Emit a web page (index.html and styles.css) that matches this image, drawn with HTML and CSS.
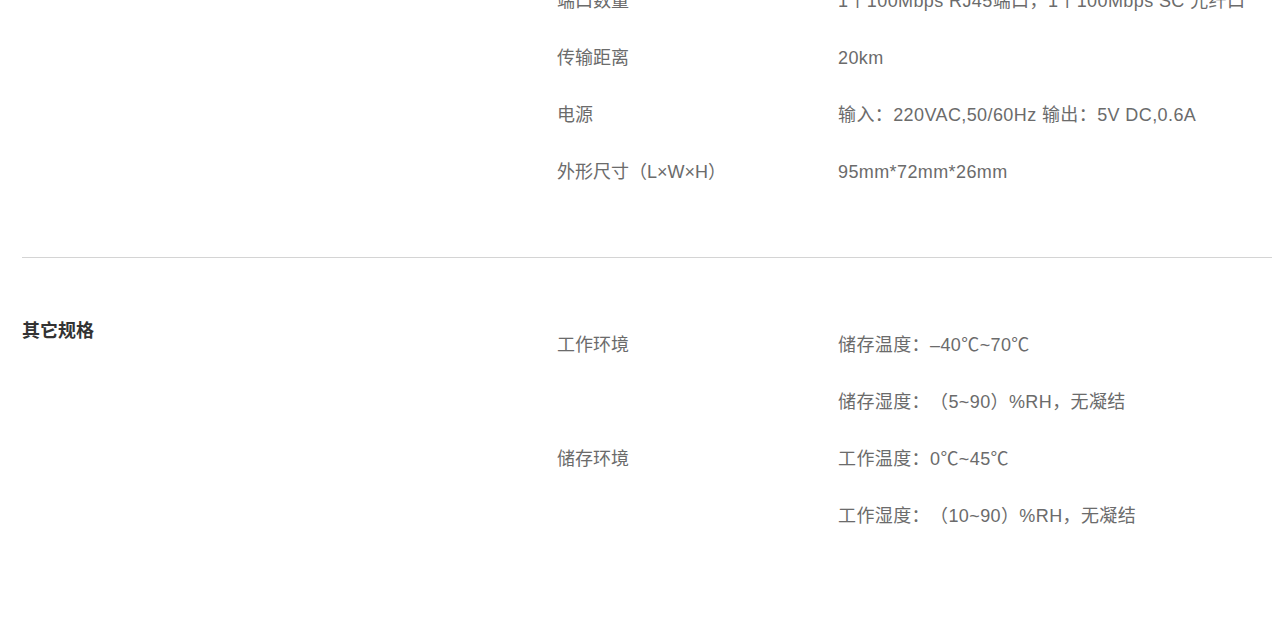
FILE: index.html
```html
<!DOCTYPE html>
<html lang="zh-CN">
<head>
    <meta charset="UTF-8">
    <meta name="viewport" content="width=device-width, initial-scale=1.0">
    <title>产品规格</title>
    <link rel="stylesheet" href="styles.css">
</head>
<body>
    <div class="specs">
        <div class="spec-section">
            <h3 class="spec-title">基本规格</h3>
            <ul class="spec-list">
                <li class="spec-row">
                    <span class="spec-label">端口数量</span>
                    <span class="spec-value">1个100Mbps RJ45端口，1个100Mbps SC 光纤口</span>
                </li>
                <li class="spec-row">
                    <span class="spec-label">传输距离</span>
                    <span class="spec-value">20km</span>
                </li>
                <li class="spec-row">
                    <span class="spec-label">电源</span>
                    <span class="spec-value">输入：220VAC,50/60Hz 输出：5V DC,0.6A</span>
                </li>
                <li class="spec-row">
                    <span class="spec-label">外形尺寸（L×W×H）</span>
                    <span class="spec-value">95mm*72mm*26mm</span>
                </li>
            </ul>
        </div>

        <div class="spec-section">
            <h3 class="spec-title">其它规格</h3>
            <ul class="spec-list">
                <li class="spec-row">
                    <span class="spec-label">工作环境</span>
                    <span class="spec-value">储存温度：–40℃~70℃</span>
                </li>
                <li class="spec-row">
                    <span class="spec-label"></span>
                    <span class="spec-value">储存湿度：（5~90）%RH，无凝结</span>
                </li>
                <li class="spec-row">
                    <span class="spec-label">储存环境</span>
                    <span class="spec-value">工作温度：0℃~45℃</span>
                </li>
                <li class="spec-row">
                    <span class="spec-label"></span>
                    <span class="spec-value">工作湿度：（10~90）%RH，无凝结</span>
                </li>
            </ul>
        </div>
    </div>
</body>
</html>
```

FILE: styles.css
```css
* {
    box-sizing: border-box;
    margin: 0;
    padding: 0;
}
body {
    font-family: 'Liberation Sans', 'Noto Sans CJK SC', sans-serif;
    font-size: 18px;
    line-height: 27px;
    color: #6b6b6b;
    background-color: #fff;
    overflow: hidden;
    text-spacing-trim: space-all;
}
/* page is shown scrolled a little past the first section's top */
.specs {
    margin-top: -84px;
    padding-left: 22px;
}
.spec-section {
    display: flex;
    padding: 59px 0 56px;
    border-bottom: 1px solid #d4d4d4;
}
.spec-section:first-child {
    padding-top: 57px;
}
.spec-section:last-child {
    border-bottom: none;
}
.spec-title {
    width: 535px;
    flex-shrink: 0;
    padding-top: 1px;
    font-size: 18px;
    font-weight: bold;
    color: #333;
}
.spec-list {
    list-style: none;
    flex: 1;
}
.spec-row {
    display: flex;
    padding: 15px 0;
}
.spec-label {
    width: 281px;
    flex-shrink: 0;
}
.spec-value {
    white-space: nowrap;
    letter-spacing: 0.4px;
}
```
